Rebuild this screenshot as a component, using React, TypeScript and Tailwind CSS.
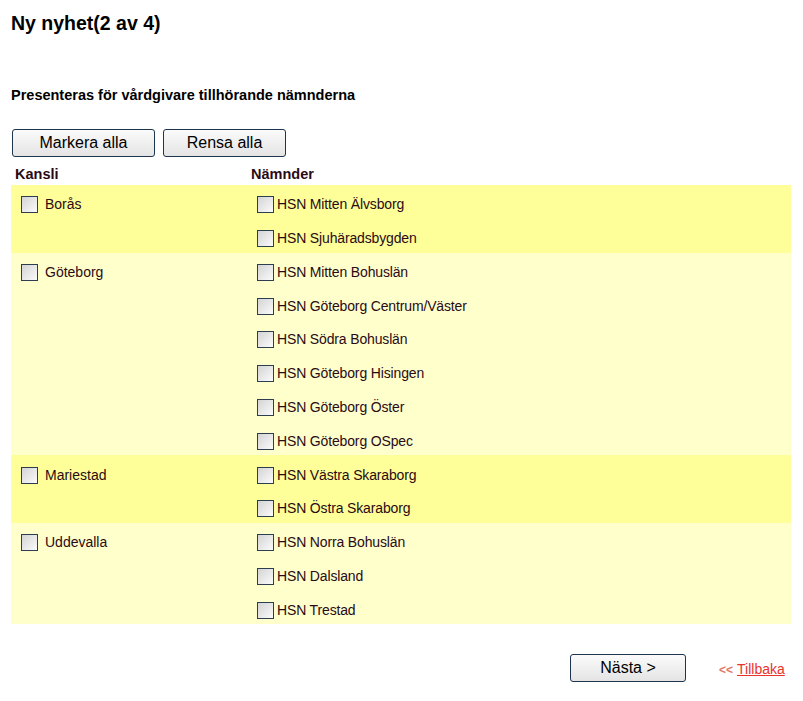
const groups = [
  { kansli: "Borås", bg: "bg-[#ffff99]", items: ["HSN Mitten Älvsborg", "HSN Sjuhäradsbygden"] },
  {
    kansli: "Göteborg",
    bg: "bg-[#ffffcc]",
    items: [
      "HSN Mitten Bohuslän",
      "HSN Göteborg Centrum/Väster",
      "HSN Södra Bohuslän",
      "HSN Göteborg Hisingen",
      "HSN Göteborg Öster",
      "HSN Göteborg OSpec",
    ],
  },
  { kansli: "Mariestad", bg: "bg-[#ffff99]", items: ["HSN Västra Skaraborg", "HSN Östra Skaraborg"] },
  { kansli: "Uddevalla", bg: "bg-[#ffffcc]", items: ["HSN Norra Bohuslän", "HSN Dalsland", "HSN Trestad"] },
]

function Box() {
  return (
    <span className="inline-block w-[17px] h-[17px] border border-[#2c3e50] bg-gradient-to-br from-[#d4d4d4] to-[#fbfbfb] shrink-0" />
  )
}

function Btn({ label, w }: { label: string; w: string }) {
  return (
    <button
      className={`${w} h-[28px] rounded-[3px] border border-[#1e3550] bg-gradient-to-b from-[#fbfbfb] to-[#e4e4e4] text-[16px] text-black`}
    >
      {label}
    </button>
  )
}

export default function App() {
  return (
    <div className="w-[803px] h-[701px] bg-white px-[11px] font-['Liberation_Sans',Arial,sans-serif] text-[#2a0a14]">
      <h1 className="pt-[12px] text-[19.5px] leading-[22px] font-bold text-black">Ny nyhet(2 av 4)</h1>

      <p className="mt-[53px] text-[14.5px] leading-[16px] font-bold text-black">
        Presenteras för vårdgivare tillhörande nämnderna
      </p>

      {/* Buttons */}
      <div className="mt-[26px] flex gap-[8px] pl-[1px]">
        <Btn label="Markera alla" w="w-[143px]" />
        <Btn label="Rensa alla" w="w-[123px]" />
      </div>

      {/* Header */}
      <div className="mt-[7px] flex h-[21px] items-center text-[14.5px] font-bold">
        <div className="w-[240px] pl-[4px]">Kansli</div>
        <div>Nämnder</div>
      </div>

      {/* Table */}
      <div className="w-[780px]">
        {groups.map((g) => (
          <div key={g.kansli} className={`flex ${g.bg}`}>
            <div className="w-[240px] h-[33.77px] flex items-center pl-[10px] gap-[7px] text-[14px] pt-[6px]">
              <Box />
              <span>{g.kansli}</span>
            </div>
            <div className="flex flex-col">
              {g.items.map((it) => (
                <div key={it} className="h-[33.77px] flex items-center pl-[6px] gap-[3px] text-[14px] tracking-[-0.15px] pt-[6px]">
                  <Box />
                  <span>{it}</span>
                </div>
              ))}
            </div>
          </div>
        ))}
      </div>

      {/* Footer */}
      <div className="mt-[30px] flex items-center">
        <div className="ml-[559px]">
          <Btn label="Nästa >" w="w-[116px]" />
        </div>
        <div className="ml-[33px] mt-[4px] text-[14px] flex items-center gap-[4px]">
          <span className="text-[#e07a6a] text-[12px] font-bold">&lt;&lt;</span>
          <a href="#" className="text-[#e8322a] underline">Tillbaka</a>
        </div>
      </div>
    </div>
  )
}
